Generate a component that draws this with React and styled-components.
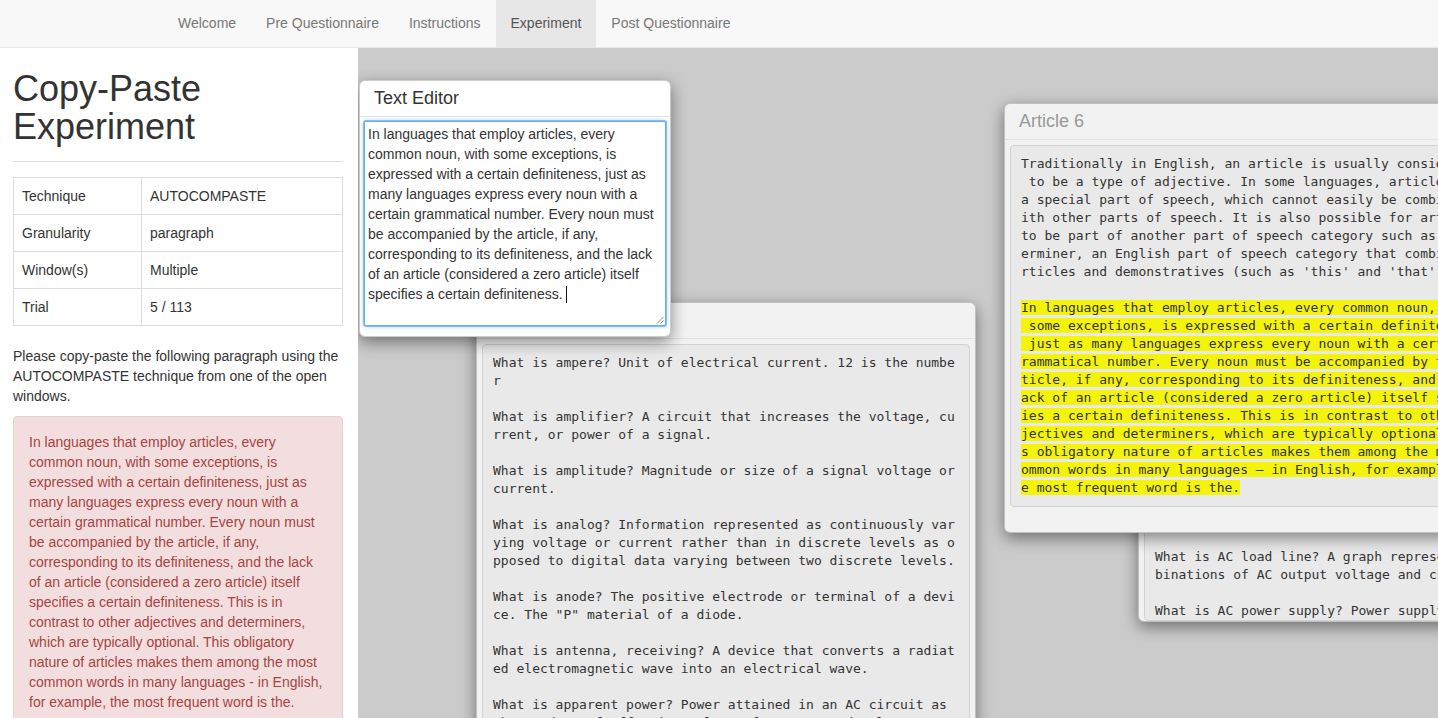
import React from "react";
import styled, { createGlobalStyle } from "styled-components";

const GlobalStyle = createGlobalStyle`
    html, body {
        margin: 0;
        padding: 0;
        height: 100%;
        overflow: hidden;
    }
    body {
        font-family: "Liberation Sans", Arial, Helvetica, sans-serif;
        font-size: 14px;
        line-height: 20px;
        color: #333;
        background: #fff;
    }
    * {
        box-sizing: border-box;
    }
`

const Page = styled.div`
    height: 100vh;
    display: flex;
    flex-direction: column;
`

const Navbar = styled.nav`
    height: 48px;
    flex-shrink: 0;
    display: flex;
    padding-left: 163px;
    background: #f8f8f8;
    border-bottom: 1px solid #e7e7e7;
`

const NavItem = styled.a`
    display: block;
    padding: 13px 15px 14px;
    line-height: 20px;
    font-size: 14px;
    color: ${props => props.$active ? "#555" : "#777"};
    background: ${props => props.$active ? "#e7e7e7" : "transparent"};
    text-decoration: none;
    cursor: pointer;
`

const Main = styled.div`
    flex: 1;
    min-height: 0;
    display: flex;
`

const Sidebar = styled.aside`
    width: 358px;
    flex-shrink: 0;
    padding: 0 15px 0 13px;
    background: #fff;
    overflow: hidden;
`

const Title = styled.h1`
    font-size: 36px;
    font-weight: 400;
    line-height: 38px;
    margin: 22px 0 0;
    color: #333;
`

const Divider = styled.hr`
    border: none;
    border-top: 1px solid #ddd;
    margin: 15px 0 15px;
`

const InfoTable = styled.table`
    width: 100%;
    border-collapse: collapse;
    margin-bottom: 20px;

    td {
        border: 1px solid #ddd;
        padding: 8px 8px;
        line-height: 20px;
    }
    td:first-child {
        width: 128px;
    }
`

const Instructions = styled.p`
    margin: 0 0 10px;
`

const Alert = styled.div`
    padding: 15px;
    background: #f2dede;
    border: 1px solid #ebccd1;
    border-radius: 4px;
    color: #a94442;
`

const Desktop = styled.div`
    flex: 1;
    position: relative;
    background: #cbcbcb;
    overflow: hidden;
`

const WindowFrame = styled.div`
    position: absolute;
    left: ${props => props.$x}px;
    top: ${props => props.$y}px;
    width: ${props => props.$w}px;
    height: ${props => props.$h}px;
    z-index: ${props => props.$z};
    display: flex;
    flex-direction: column;
    background: ${props => props.$active ? "#fff" : "#f2f2f2"};
    border: 1px solid rgba(0, 0, 0, 0.2);
    border-radius: 6px;
    box-shadow: 0 5px 16px rgba(0, 0, 0, 0.45);
    overflow: hidden;
`

const WindowHeader = styled.div`
    height: 36px;
    flex-shrink: 0;
    padding: 0 14px;
    display: flex;
    align-items: center;
    border-bottom: 1px solid ${props => props.$active ? "#e5e5e5" : "#e0e0e0"};
`

const WindowTitle = styled.h4`
    margin: 0 0 1px;
    font-size: 18px;
    font-weight: 400;
    color: ${props => props.$active ? "#333" : "#999"};
`

const WindowBody = styled.div`
    flex: 1;
    min-height: 0;
    padding: ${props => props.$pad};
`

const Pre = styled.pre`
    margin: 0;
    padding: 9px 10px;
    height: ${props => props.$fill ? "100%" : "auto"};
    font-family: "DejaVu Sans Mono", Menlo, monospace;
    font-size: 13px;
    line-height: 18px;
    color: #333;
    background: #e9e9e9;
    border: 1px solid #d2d2d2;
    border-radius: 4px;
    white-space: pre;
    overflow: hidden;
`

const Mark = styled.span`
    background: #f3f30c;
`

const EditorBox = styled.div`
    position: relative;
    height: 205px;
    padding: 2px 2px 2px 3px;
    border: 1px solid #66afe9;
    border-radius: 2px;
    box-shadow: 0 0 0 1px #8bbdf0, 0 0 5px rgba(102, 175, 233, 0.7);
    font-size: 14px;
    line-height: 20px;
    color: #333;
    background: #fff;
`

const Caret = styled.span`
    display: inline-block;
    width: 1px;
    height: 17px;
    margin-left: 3px;
    vertical-align: -4px;
    background: #111;
`

const ResizeGrip = styled.svg`
    position: absolute;
    right: 1px;
    bottom: 1px;
`

const editorText = "In languages that employ articles, every common noun, with some exceptions, is expressed with a certain definiteness, just as many languages express every noun with a certain grammatical number. Every noun must be accompanied by the article, if any, corresponding to its definiteness, and the lack of an article (considered a zero article) itself specifies a certain definiteness."

const targetText = editorText + " This is in contrast to other adjectives and determiners, which are typically optional. This obligatory nature of articles makes them among the most common words in many languages - in English, for example, the most frequent word is the."

const glossaryLines = [
    "What is ampere? Unit of electrical current. 12 is the numbe",
    "r",
    "",
    "What is amplifier? A circuit that increases the voltage, cu",
    "rrent, or power of a signal.",
    "",
    "What is amplitude? Magnitude or size of a signal voltage or",
    "current.",
    "",
    "What is analog? Information represented as continuously var",
    "ying voltage or current rather than in discrete levels as o",
    "pposed to digital data varying between two discrete levels.",
    "",
    "What is anode? The positive electrode or terminal of a devi",
    "ce. The \"P\" material of a diode.",
    "",
    "What is antenna, receiving? A device that converts a radiat",
    "ed electromagnetic wave into an electrical wave.",
    "",
    "What is apparent power? Power attained in an AC circuit as",
    "the product of effective values of current and voltage.",
]

const acLines = [
    "What is AC? Alternating current; current that changes direc",
    "tion periodically.",
    "",
    "What is AC beta? The ratio of collector current to base cur",
    "rent in a transistor.",
    "",
    "What is AC generator? A device that converts mechanical ene",
    "rgy into alternating current.",
    "",
    "What is AC load? The impedance seen by the output of an amp",
    "lifier.",
    "",
    "What is AC load line? A graph representing all possible com",
    "binations of AC output voltage and current for a load.",
    "",
    "What is AC power supply? Power supply that provides alterna",
    "ting voltage.",
]

const articleIntro = [
    "Traditionally in English, an article is usually considered",
    " to be a type of adjective. In some languages, articles are",
    "a special part of speech, which cannot easily be combined w",
    "ith other parts of speech. It is also possible for articles",
    "to be part of another part of speech category such as a det",
    "erminer, an English part of speech category that combines a",
    "rticles and demonstratives (such as 'this' and 'that').",
]

const articleHighlight = [
    "In languages that employ articles, every common noun, with",
    " some exceptions, is expressed with a certain definiteness,",
    " just as many languages express every noun with a certain g",
    "rammatical number. Every noun must be accompanied by the ar",
    "ticle, if any, corresponding to its definiteness, and the l",
    "ack of an article (considered a zero article) itself specif",
    "ies a certain definiteness. This is in contrast to other ad",
    "jectives and determiners, which are typically optional. Thi",
    "s obligatory nature of articles makes them among the most c",
    "ommon words in many languages – in English, for example, th",
    "e most frequent word is the.",
]

const info = [
    ["Technique", "AUTOCOMPASTE"],
    ["Granularity", "paragraph"],
    ["Window(s)", "Multiple"],
    ["Trial", "5 / 113"],
]

const navItems = ["Welcome", "Pre Questionnaire", "Instructions", "Experiment", "Post Questionnaire"]

const Window = ({ title, active, x, y, w, h, z, pad, children }) => (
    <WindowFrame $active={active} $x={x} $y={y} $w={w} $h={h} $z={z}>
        <WindowHeader $active={active}>
            <WindowTitle $active={active}>{title}</WindowTitle>
        </WindowHeader>
        <WindowBody $pad={pad}>{children}</WindowBody>
    </WindowFrame>
)

const App = () => {
    return (
        <Page>
            <GlobalStyle />
            <Navbar>
                {navItems.map(item => (
                    <NavItem key={item} $active={item === "Experiment"}>{item}</NavItem>
                ))}
            </Navbar>
            <Main>
                <Sidebar>
                    <Title>Copy-Paste<br />Experiment</Title>
                    <Divider />
                    <InfoTable>
                        <tbody>
                            {info.map(([label, value]) => (
                                <tr key={label}>
                                    <td>{label}</td>
                                    <td>{value}</td>
                                </tr>
                            ))}
                        </tbody>
                    </InfoTable>
                    <Instructions>
                        Please copy-paste the following paragraph using the AUTOCOMPASTE technique from one of the open windows.
                    </Instructions>
                    <Alert>{targetText}</Alert>
                </Sidebar>
                <Desktop>
                    <Window title="Article 2" x={118} y={254} w={500} h={520} z={1} pad="5px 5px 20px">
                        <Pre>{glossaryLines.join("\n")}</Pre>
                    </Window>
                    <Window title="Article 4" x={780} y={232} w={500} h={342} z={2} pad="5px 5px 0">
                        <Pre $fill>{acLines.join("\n")}</Pre>
                    </Window>
                    <Window title="Article 6" x={646} y={55} w={500} h={430} z={3} pad="5px 5px 20px">
                        <Pre>
                            {articleIntro.join("\n") + "\n\n"}
                            <Mark>{articleHighlight.join("\n")}</Mark>
                        </Pre>
                    </Window>
                    <Window title="Text Editor" active x={1} y={32} w={312} h={257} z={4} pad="4px 4px 10px">
                        <EditorBox>
                            {editorText}
                            <Caret />
                            <ResizeGrip width="8" height="8" viewBox="0 0 8 8">
                                <path d="M1 7.5L7.5 1M4.5 7.5L7.5 4.5" stroke="#888" strokeWidth="1" fill="none" />
                            </ResizeGrip>
                        </EditorBox>
                    </Window>
                </Desktop>
            </Main>
        </Page>
    )
}

export default App
